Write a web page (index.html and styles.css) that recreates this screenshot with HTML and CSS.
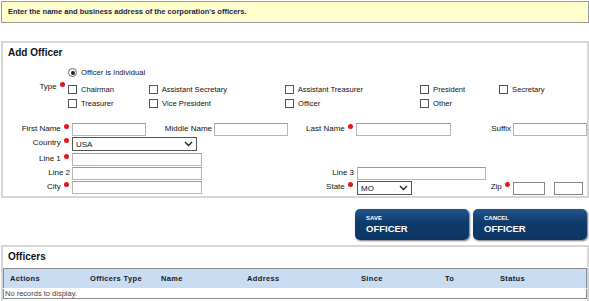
FILE: index.html
```html
<!doctype html>
<html>
<head>
<meta charset="utf-8">
<title>Officers</title>
<link rel="stylesheet" href="styles.css">
</head>
<body>
<div class="notice">Enter the name and business address of the corporation's officers.</div>

<div class="panel addPanel">
	<h2>Add Officer</h2>
	<div class="radioRow">
		<label><input type="radio" checked> Officer is Individual</label>
	</div>
	<div class="typeGrid">
		<span class="typeLabel">Type <span class="req"></span></span>
		<label><input type="checkbox"> Chairman</label>
		<label><input type="checkbox"> Assistant Secretary</label>
		<label><input type="checkbox"> Assistant Treasurer</label>
		<label><input type="checkbox"> President</label>
		<label><input type="checkbox"> Secretary</label>
		<label><input type="checkbox"> Treasurer</label>
		<label><input type="checkbox"> Vice President</label>
		<label><input type="checkbox"> Officer</label>
		<label><input type="checkbox"> Other</label>
	</div>
	<div class="fields">
		<span class="lbl">First Name <span class="req"></span></span>
		<span class="fld"><input type="text" class="w74"></span>
		<span class="lbl">Middle Name</span>
		<span class="fld"><input type="text" class="w74"></span>
		<span class="lbl">Last Name <span class="req"></span></span>
		<span class="fld"><input type="text" class="w95"></span>
		<span class="lbl">Suffix</span>
		<span class="fld"><input type="text" class="w74"></span>

		<span class="lbl">Country <span class="req"></span></span>
		<span class="fld span3"><span class="sel w125"><select><option>USA</option></select><svg class="chev" width="9" height="6" viewBox="0 0 9 6"><path d="M1 1l3.5 3.5L8 1" fill="none" stroke="#222" stroke-width="1.4"/></svg></span></span>
		<span class="gap4"></span>

		<span class="lbl">Line 1 <span class="req"></span></span>
		<span class="fld span3"><input type="text" class="w130"></span>
		<span class="gap4"></span>

		<span class="lbl">Line 2</span>
		<span class="fld span3"><input type="text" class="w130"></span>
		<span class="lbl">Line 3</span>
		<span class="fld span3"><input type="text" class="w129 ml1"></span>

		<span class="lbl">City <span class="req"></span></span>
		<span class="fld span3"><input type="text" class="w130"></span>
		<span class="lbl">State <span class="req"></span></span>
		<span class="fld"><span class="sel w55 ml1"><select><option>MO</option></select><svg class="chev" width="9" height="6" viewBox="0 0 9 6"><path d="M1 1l3.5 3.5L8 1" fill="none" stroke="#222" stroke-width="1.4"/></svg></span></span>
		<span class="lbl">Zip <span class="req"></span></span>
		<span class="fld zip"><input type="text" class="w32"><input type="text" class="w29"></span>
	</div>
</div>

<div class="buttons">
	<a class="btn" href="#"><small>SAVE</small>OFFICER</a>
	<a class="btn" href="#"><small>CANCEL</small>OFFICER</a>
</div>

<div class="panel listPanel">
	<h2>Officers</h2>
	<table class="grid">
		<tr>
			<th class="c1">Actions</th>
			<th class="c2">Officers Type</th>
			<th class="c3">Name</th>
			<th class="c4">Address</th>
			<th class="c5">Since</th>
			<th class="c6">To</th>
			<th>Status</th>
		</tr>
		<tr>
			<td colspan="7" class="empty">No records to display.</td>
		</tr>
	</table>
</div>
</body>
</html>
```

FILE: styles.css
```css
html,
body {
	margin: 0;
	background: #fff;
}
body {
	width: 589px;
	font-family: "Liberation Sans", Arial, sans-serif;
	font-size: 7.6px;
	color: #111;
	overflow: hidden;
	-webkit-font-smoothing: antialiased;
}
.notice {
	margin: 1px 0 0 1px;
	width: 588px;
	height: 22px;
	box-sizing: border-box;
	border: 1px solid #999;
	background: #ffffcc;
	padding-left: 6px;
	line-height: 19px;
	font-weight: bold;
	font-size: 7.5px;
	color: #1c1c4c;
}
.panel {
	margin-left: 1px;
	width: 588px;
	box-sizing: border-box;
	border: 2px solid #d6d6d6;
}
.addPanel {
	margin-top: 18px;
	height: 157px;
}
h2 {
	margin: 0;
	padding: 4px 0 0 5px;
	font-size: 10px;
	font-weight: bold;
	color: #111;
	height: 16px;
}
input[type=radio],
input[type=checkbox] {
	-webkit-appearance: none;
	appearance: none;
	margin: 0 2px 0 0;
	vertical-align: -2px;
	background: #fff;
}
input[type=checkbox] {
	width: 9px;
	height: 9px;
	border: 1px solid #555;
}
input[type=radio] {
	width: 9px;
	height: 9px;
	border: 1px solid #666;
	border-radius: 50%;
	position: relative;
}
input[type=radio]:checked::after {
	content: "";
	position: absolute;
	left: 1.5px;
	top: 1.5px;
	width: 4px;
	height: 4px;
	border-radius: 50%;
	background: #222;
}
.radioRow {
	padding: 5px 0 0 65px;
	height: 12px;
}
.typeGrid {
	display: grid;
	grid-template-columns: 65px 81px 136px 135px 79px auto;
	grid-auto-rows: 14px;
	margin-top: 5px;
	height: 34px;
}
.typeGrid label {
	white-space: nowrap;
}
.typeLabel {
	grid-row: span 2;
	text-align: right;
	padding-right: 2px;
	margin-top: -3px;
	font-size: 8px;
}
.req {
	display: inline-block;
	width: 5px;
	height: 5px;
	border-radius: 50%;
	background: #e0161b;
	margin: 0 1px 0 1px;
	vertical-align: 2px;
}
.fields {
	display: grid;
	grid-template-columns: 69px 74px 68px 76px 66px 95px 62px 74px;
	grid-template-rows: 14px 16px 14px 14px 14px;
	margin-top: 4px;
}
.lbl {
	text-align: right;
	padding-right: 2px;
	white-space: nowrap;
	line-height: 11px;
	font-size: 8px;
}
.fld {
	white-space: nowrap;
}
.span3 {
	grid-column: span 3;
}
.gap4 {
	grid-column: span 4;
}
input[type=text] {
	height: 13px;
	box-sizing: border-box;
	border: 1px solid #b5b5b5;
	border-top-color: #999;
	margin: 0;
	padding: 0;
	vertical-align: top;
}
.w74 { width: 74px; }
.w95 { width: 95px; }
.w130 { width: 130px; }
.w129 { width: 129px; }
.w125 { width: 125px; }
.w55 { width: 55px; }
.w32 { width: 32px; }
.w29 { width: 29px; margin-left: 9px !important; }
.ml1 { margin-left: 1px !important; }
.zip input {
	border-color: #888;
	margin-top: 1px;
}
.sel {
	position: relative;
	display: inline-block;
	height: 14px;
	vertical-align: top;
}
.sel select {
	-webkit-appearance: none;
	appearance: none;
	width: 100%;
	height: 14px;
	box-sizing: border-box;
	border: 1px solid #555;
	border-radius: 0;
	background: #fff;
	margin: 0;
	padding: 0 0 0 3px;
	font-family: "Liberation Sans", Arial, sans-serif;
	font-size: 8px;
	color: #111;
}
.chev {
	position: absolute;
	right: 4px;
	top: 4px;
}
.buttons {
	display: flex;
	justify-content: flex-end;
	gap: 4px;
	margin: 11px 2px 0 0;
}
.btn {
	display: block;
	width: 114px;
	height: 31px;
	box-sizing: border-box;
	border-radius: 5px;
	background: linear-gradient(#23548a, #0f3b6c 45%, #0c3664);
	box-shadow: 1px 1px 2px rgba(0,0,0,.55);
	color: #fff;
	text-decoration: none;
	padding: 6px 0 0 11px;
	font-weight: bold;
	font-size: 9.5px;
	line-height: 13px;
}
.btn small {
	display: block;
	font-size: 6px;
	line-height: 7px;
}
.listPanel {
	margin-top: 5px;
	height: 60px;
}
.listPanel h2 {
	height: 17px;
	padding-top: 4px;
}
.grid {
	width: 584px;
	border-collapse: collapse;
	table-layout: fixed;
	border: 1px solid #8a8a8a;
	margin-left: 0;
}
.grid th {
	background: #c9dcf1;
	text-align: left;
	font-weight: bold;
	font-size: 7.5px;
	letter-spacing: .35px;
	color: #1a1a1a;
	height: 19px;
	padding: 0 0 0 6px;
}
.c1 { width: 74px; }
.c2 { width: 65px; }
.c3 { width: 80px; }
.c4 { width: 108px; }
.c5 { width: 78px; }
.c6 { width: 49px; }
.grid td.empty {
	padding: 0 0 0 1px;
	height: 9px;
	font-size: 7.5px;
	color: #444;
	border-top: 1px solid #fff;
}
```
